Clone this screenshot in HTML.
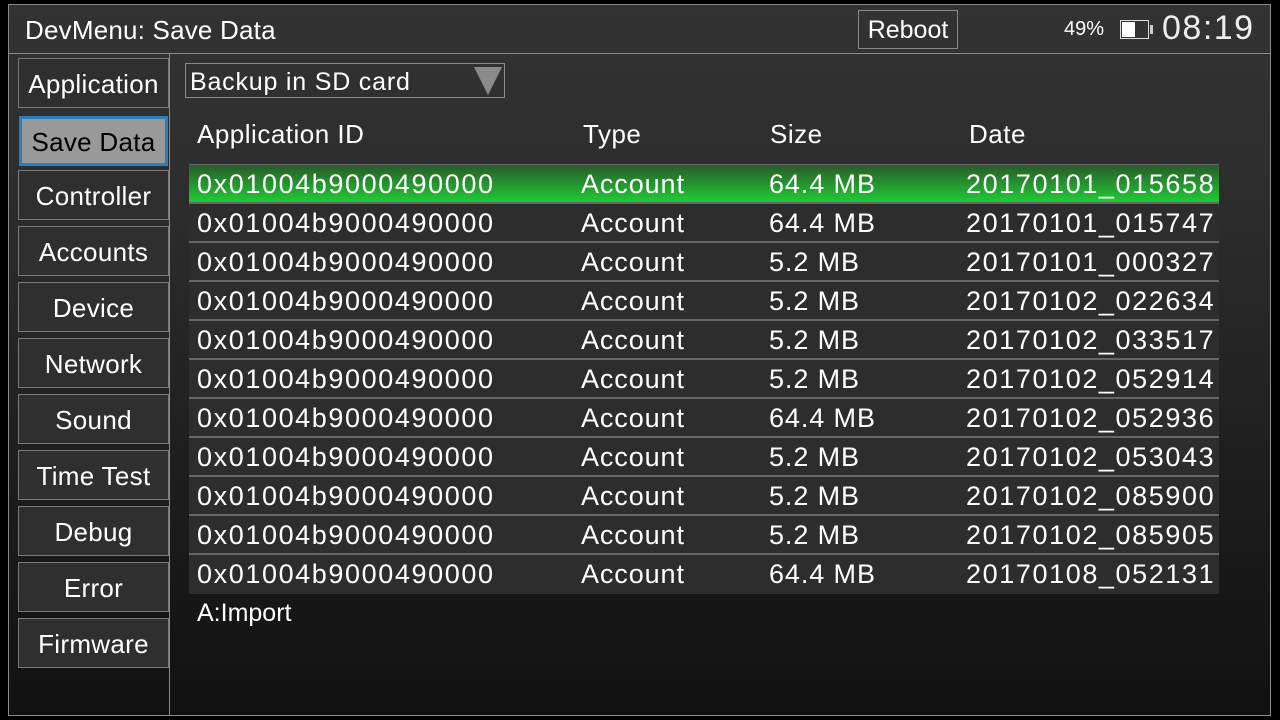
<!DOCTYPE html>
<html><head><style>
*{margin:0;padding:0;box-sizing:border-box}
body{width:1280px;height:720px;background:#000;font-family:"Liberation Sans",sans-serif;color:#fff;position:relative;overflow:hidden}
.frame{position:absolute;left:8px;top:4px;width:1263px;height:712px;border:1px solid #8a8a8a;background:linear-gradient(#333 0%,#2c2c2c 30%,#1a1a1a 75%,#111 100%)}
.hdr{position:absolute;left:8px;top:4px;width:1263px;height:50px;border-bottom:1px solid #8a8a8a}
.abs{position:absolute;white-space:nowrap}
.side{position:absolute;left:169px;top:54px;width:1px;height:662px;background:#8a8a8a}
.btn{position:absolute;left:18px;width:151px;height:50px;border:1px solid #7a7a7a;background:#2f2f2f;font-size:26px;text-align:center;line-height:50px;letter-spacing:.3px}
.sel{background:#999;color:#000;border:3px solid #2a7fc0;left:19px;width:149px;line-height:46px}
.row{position:absolute;left:189px;width:1030px;height:39px;background:#2d2d2d;border-bottom:2px solid #666;font-size:27px;letter-spacing:1.6px}
.row span{position:absolute;top:4px}
.row span:nth-child(2),.row span:nth-child(3){letter-spacing:.9px}
.g{background:linear-gradient(#2a5a2a,#1fcc33)}
.th{position:absolute;top:119px;font-size:26px;letter-spacing:.5px}
</style></head><body>
<div class="frame"></div>
<div class="hdr"></div>
<div class="abs" style="left:25px;top:15px;font-size:26px;letter-spacing:.2px">DevMenu: Save Data</div>
<div class="abs" style="left:858px;top:10px;width:100px;height:39px;border:1px solid #8a8a8a;font-size:25px;text-align:center;line-height:39px">Reboot</div>
<div class="abs" style="left:1064px;top:18px;font-size:20px">49%</div>
<div class="abs" style="left:1120px;top:20px;width:29px;height:19px;border:1px solid #ddd"><div style="width:13px;height:15px;margin:1px;background:#fff"></div></div>
<div class="abs" style="left:1150px;top:25px;width:3px;height:9px;background:#ccc"></div>
<div class="abs" style="left:1162px;top:9px;font-size:34px;letter-spacing:1.5px;color:#eee">08:19</div>
<div class="side"></div>
<div class="btn" style="top:58px">Application</div>
<div class="btn sel" style="top:116px">Save Data</div>
<div class="btn" style="top:170px">Controller</div>
<div class="btn" style="top:226px">Accounts</div>
<div class="btn" style="top:282px">Device</div>
<div class="btn" style="top:338px">Network</div>
<div class="btn" style="top:394px">Sound</div>
<div class="btn" style="top:450px">Time Test</div>
<div class="btn" style="top:506px">Debug</div>
<div class="btn" style="top:562px">Error</div>
<div class="btn" style="top:618px">Firmware</div>
<div class="abs" style="left:185px;top:63px;width:320px;height:35px;border:1px solid #8a8a8a;font-size:25px;padding-left:4px;line-height:37px;letter-spacing:.8px">Backup in SD card</div>
<svg class="abs" style="left:473px;top:66px" width="30" height="30"><polygon points="1,1 29,1 15,29" fill="#8a8a8a"/></svg>
<div class="th" style="left:197px">Application ID</div>
<div class="th" style="left:583px">Type</div>
<div class="th" style="left:770px">Size</div>
<div class="th" style="left:969px">Date</div>
<div class="abs" style="left:189px;top:164px;width:1030px;height:430px;border:1px solid #666"></div>
<div class="row g" style="top:165px"><span style="left:8px">0x01004b9000490000</span><span style="left:392px">Account</span><span style="left:580px">64.4 MB</span><span style="left:777px">20170101_015658</span></div>
<div class="row" style="top:204px"><span style="left:8px">0x01004b9000490000</span><span style="left:392px">Account</span><span style="left:580px">64.4 MB</span><span style="left:777px">20170101_015747</span></div>
<div class="row" style="top:243px"><span style="left:8px">0x01004b9000490000</span><span style="left:392px">Account</span><span style="left:580px">5.2 MB</span><span style="left:777px">20170101_000327</span></div>
<div class="row" style="top:282px"><span style="left:8px">0x01004b9000490000</span><span style="left:392px">Account</span><span style="left:580px">5.2 MB</span><span style="left:777px">20170102_022634</span></div>
<div class="row" style="top:321px"><span style="left:8px">0x01004b9000490000</span><span style="left:392px">Account</span><span style="left:580px">5.2 MB</span><span style="left:777px">20170102_033517</span></div>
<div class="row" style="top:360px"><span style="left:8px">0x01004b9000490000</span><span style="left:392px">Account</span><span style="left:580px">5.2 MB</span><span style="left:777px">20170102_052914</span></div>
<div class="row" style="top:399px"><span style="left:8px">0x01004b9000490000</span><span style="left:392px">Account</span><span style="left:580px">64.4 MB</span><span style="left:777px">20170102_052936</span></div>
<div class="row" style="top:438px"><span style="left:8px">0x01004b9000490000</span><span style="left:392px">Account</span><span style="left:580px">5.2 MB</span><span style="left:777px">20170102_053043</span></div>
<div class="row" style="top:477px"><span style="left:8px">0x01004b9000490000</span><span style="left:392px">Account</span><span style="left:580px">5.2 MB</span><span style="left:777px">20170102_085900</span></div>
<div class="row" style="top:516px"><span style="left:8px">0x01004b9000490000</span><span style="left:392px">Account</span><span style="left:580px">5.2 MB</span><span style="left:777px">20170102_085905</span></div>
<div class="row" style="top:555px;border-bottom:none"><span style="left:8px">0x01004b9000490000</span><span style="left:392px">Account</span><span style="left:580px">64.4 MB</span><span style="left:777px">20170108_052131</span></div>
<div class="abs" style="left:197px;top:599px;font-size:25px">A:Import</div>
</body></html>
